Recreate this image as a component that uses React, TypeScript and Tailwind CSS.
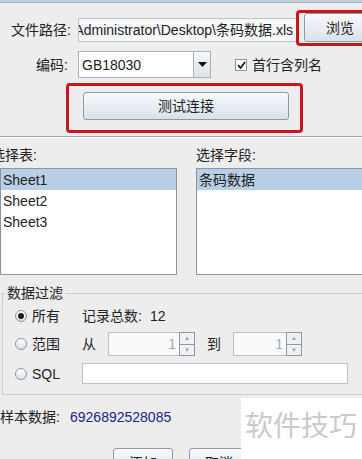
import { ReactNode } from 'react';

const font = { fontFamily: '"Liberation Sans", "Noto Sans CJK SC", sans-serif' };

function Radio({ checked }: { checked?: boolean }) {
  return (
    <span className="w-[12px] h-[12px] rounded-full border border-[#8b95a1] bg-gradient-to-b from-white to-[#dbe2ea] flex items-center justify-center shrink-0">
      {checked && <span className="w-[6px] h-[6px] rounded-full bg-[#1f1f1f]" />}
    </span>
  );
}

function Spinner({ width }: { width: number }) {
  return (
    <div className="flex h-[24px]">
      <div
        className="h-full border border-[#b9c0c8] bg-[#f7f9fb] flex items-center justify-end pr-[3px] text-[#a8a8a8]"
        style={{ width }}
      >
        1
      </div>
      <div className="w-[16px] h-full flex flex-col border border-[#8f98a2] -ml-px">
        <div className="flex-1 bg-[#eef1f4] border-b border-[#8f98a2] flex items-center justify-center">
          <span className="text-[6px] leading-none text-[#9aa2ab]">▲</span>
        </div>
        <div className="flex-1 bg-[#eef1f4] flex items-center justify-center">
          <span className="text-[6px] leading-none text-[#9aa2ab]">▼</span>
        </div>
      </div>
    </div>
  );
}

function Btn({ children, className }: { children: ReactNode; className: string }) {
  return (
    <div
      className={`border border-[#8e9aa8] rounded-[3px] bg-gradient-to-b from-[#f8fafc] to-[#d9e1ea] flex items-center justify-center text-[#222] shrink-0 ${className}`}
    >
      {children}
    </div>
  );
}

export default function App() {
  return (
    <div
      className="relative w-[362px] h-[459px] overflow-hidden bg-[#ededed] text-[14px] leading-[16px] text-[#222]"
      style={font}
    >
      {/* window top edge */}
      <div className="h-[3px] bg-[#c3d1de] border-b border-[#9fb0c1]" />

      {/* 文件路径 */}
      <div className="flex items-end h-[29px] mt-[10px]">
        <div className="w-[71px] h-[24px] flex items-center justify-end shrink-0">文件路径:</div>
        <div className="ml-[7px] w-[219px] h-[24px] border border-[#bcc3cb] bg-[#f6f7f8] flex items-center justify-end overflow-hidden whitespace-nowrap pr-[3px] shrink-0">
          Administrator\Desktop\条码数据.xls
        </div>
        <Btn className="ml-[7px] w-[72px] h-[29px]">浏览</Btn>
      </div>

      {/* 编码 */}
      <div className="flex items-center h-[27px] mt-[9px]">
        <div className="w-[68px] text-right shrink-0">编码:</div>
        <div className="ml-[10px] w-[133px] h-[27px] border border-[#a9b1ba] bg-white flex shrink-0">
          <div className="flex-1 flex items-center pl-[3px]">GB18030</div>
          <div className="w-[17px] border-l border-[#a9b1ba] bg-gradient-to-b from-[#f6f8fa] to-[#dce3ea] flex items-center justify-center">
            <svg width="9" height="5" viewBox="0 0 9 5">
              <path d="M0 0h9L4.5 5z" fill="#111" />
            </svg>
          </div>
        </div>
        <div className="ml-[24px] w-[12px] h-[12px] border border-[#8b95a1] bg-white flex items-center justify-center shrink-0">
          <svg width="9" height="8" viewBox="0 0 9 8">
            <path d="M1 4l2.5 3L8 1" stroke="#1b1b1b" strokeWidth="1.8" fill="none" />
          </svg>
        </div>
        <div className="ml-[5px]">首行含列名</div>
      </div>

      {/* 测试连接 */}
      <Btn className="ml-[83px] mt-[14px] w-[206px] h-[28px]">测试连接</Btn>

      <div className="mt-[16px] h-[2px] border-t border-[#98a3ae] bg-white" />

      {/* 选择表 / 选择字段 */}
      <div className="flex mt-[9px]">
        <div className="w-[196px] -ml-[9px]">选择表:</div>
        <div className="ml-[9px]">选择字段:</div>
      </div>

      <div className="flex mt-[5px] h-[107px]">
        <div className="w-[177px] h-full border border-[#8a96a3] bg-white shrink-0">
          <div className="h-[21px] bg-[#b8cfe6] flex items-center pl-[2px]">Sheet1</div>
          <div className="h-[21px] flex items-center pl-[2px]">Sheet2</div>
          <div className="h-[21px] flex items-center pl-[2px]">Sheet3</div>
        </div>
        <div className="ml-[19px] w-[180px] h-full border border-[#8a96a3] bg-white shrink-0">
          <div className="h-[21px] bg-[#b8cfe6] flex items-center pl-[2px]">条码数据</div>
        </div>
      </div>

      {/* 数据过滤 */}
      <fieldset className="ml-[2px] mt-[10px] w-[380px] border border-[#c4cfda] pb-[10px]">
        <legend className="ml-[2px] px-[2px] text-[#222]">数据过滤</legend>

        <div className="pl-[12px]">
          <div className="flex items-center h-[20px] mt-[5px]">
            <Radio checked />
            <span className="ml-[5px] w-[50px]">所有</span>
            <span>记录总数:</span>
            <span className="ml-[8px]">12</span>
          </div>

          <div className="flex items-center h-[24px] mt-[6px]">
            <Radio />
            <span className="ml-[5px] w-[50px]">范围</span>
            <span className="w-[26px]">从</span>
            <Spinner width={72} />
            <span className="ml-[12px] w-[26px]">到</span>
            <Spinner width={54} />
          </div>

          <div className="flex items-center h-[21px] mt-[7px]">
            <Radio />
            <span className="ml-[5px] w-[50px]">SQL</span>
            <div className="w-[266px] h-[21px] border border-[#bcc3cb] bg-white" />
          </div>
        </div>
      </fieldset>

      {/* 样本数据 */}
      <div className="flex mt-[14px]">
        <span className="w-[70px]">样本数据:</span>
        <span className="text-[#21218f]">6926892528085</span>
      </div>

      <div className="flex mt-[23px] ml-[113px]">
        <Btn className="w-[60px] h-[30px] border-[#5e6b78]">添加</Btn>
        <Btn className="ml-[16px] w-[60px] h-[30px]">取消</Btn>
      </div>

      {/* 红色标注框 */}
      <div className="absolute left-[296px] top-[10px] w-[72px] h-[36px] border-[3px] border-[#c9161d] rounded-[4px]" />
      <div className="absolute left-[66px] top-[83px] w-[237px] h-[50px] border-[3px] border-[#c9161d] rounded-[4px]" />

      {/* 水印 */}
      <div className="absolute left-[241px] top-[398px] w-[121px] h-[61px] bg-white pl-[4px] pt-[12px]">
        <span className="text-[28px] leading-[34px] text-[#cacaca]">软件技巧</span>
      </div>
    </div>
  );
}
